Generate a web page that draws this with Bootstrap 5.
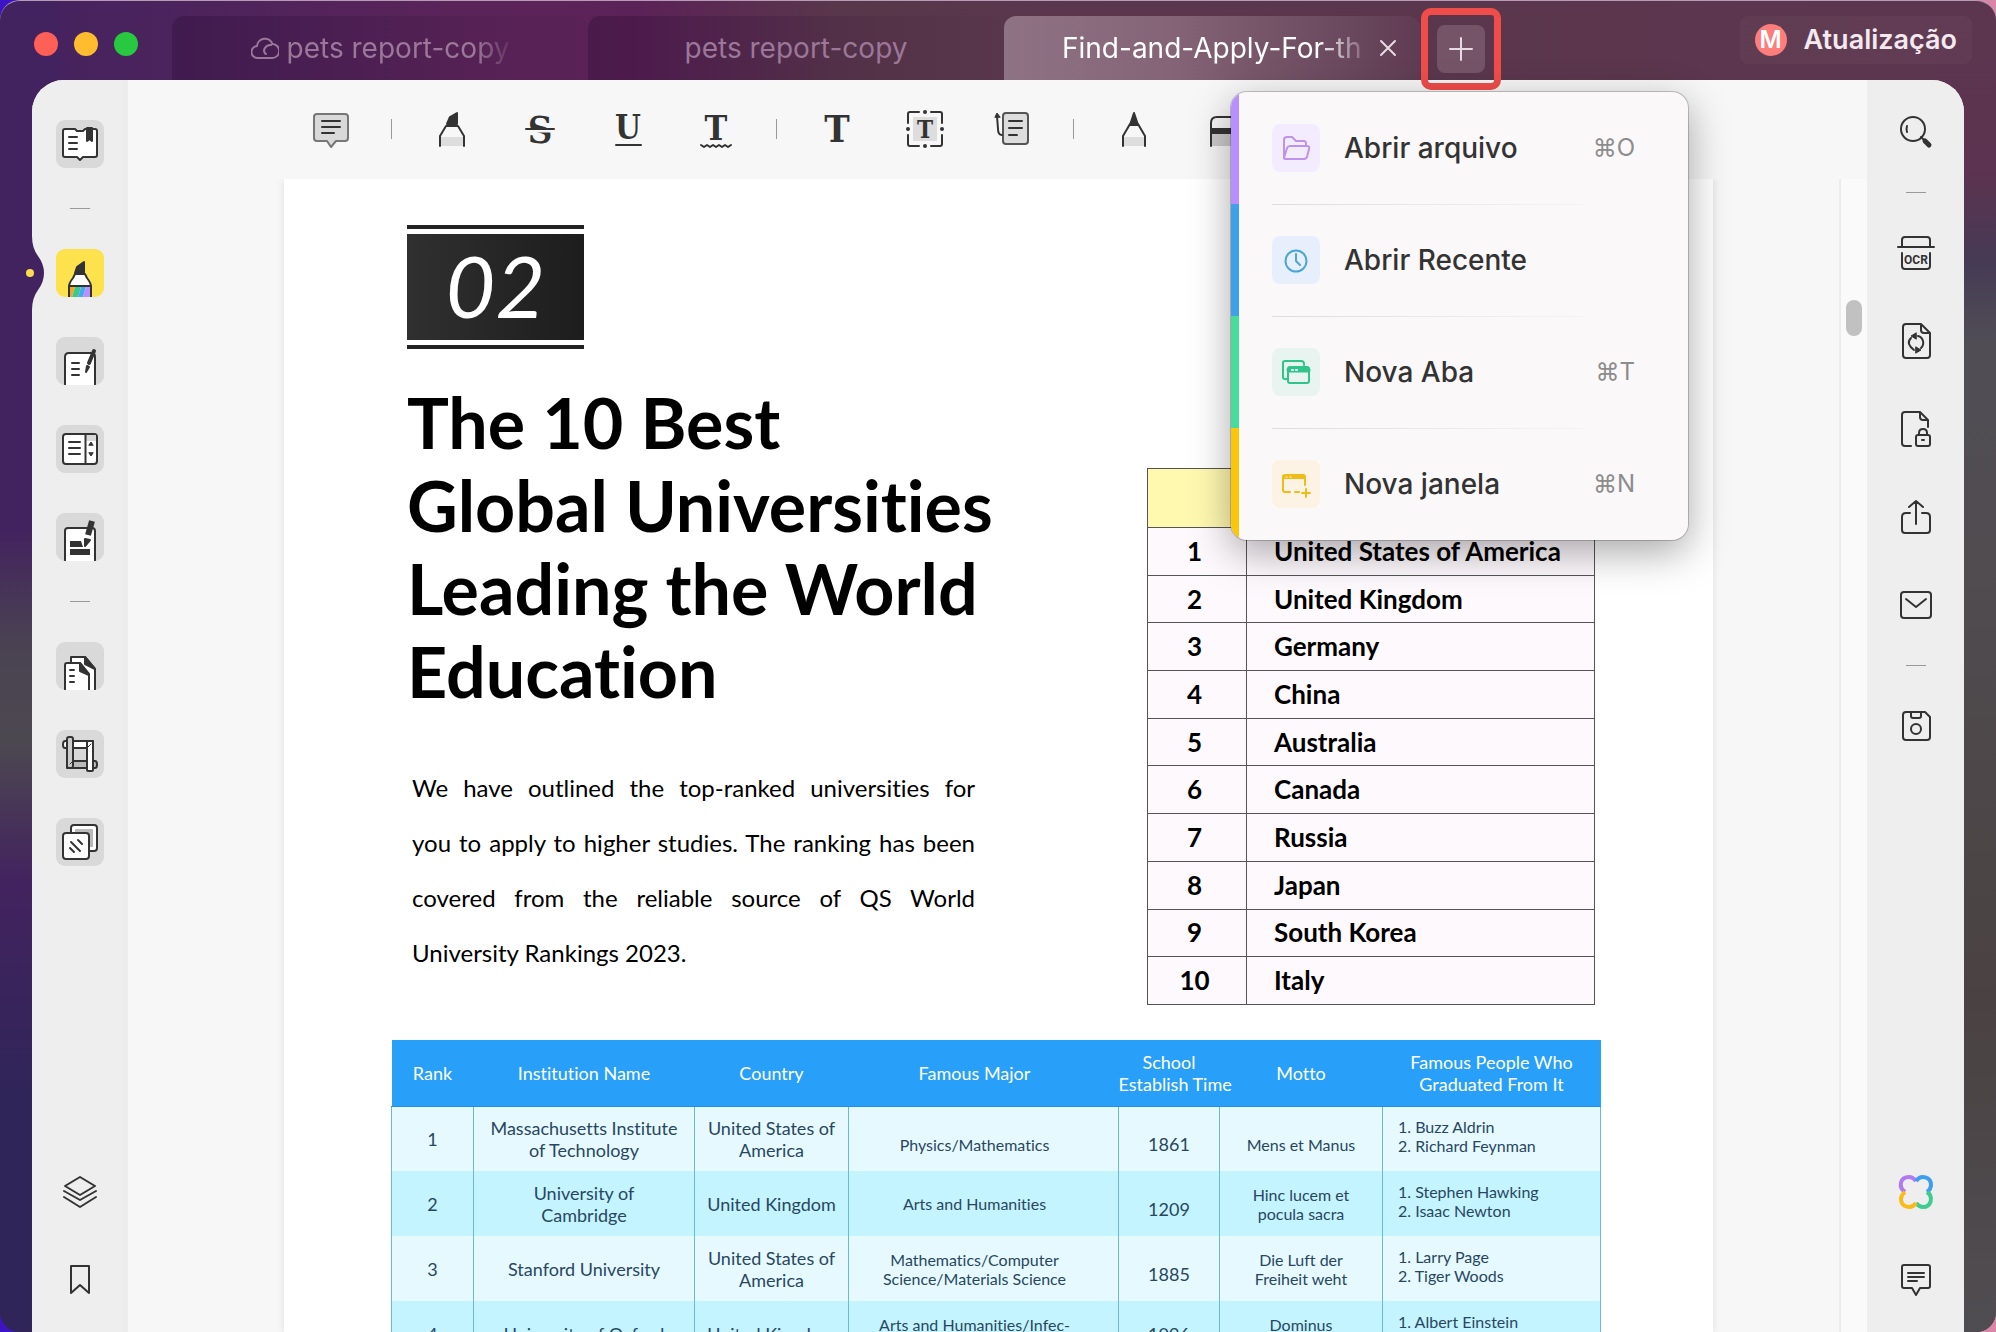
<!DOCTYPE html>
<html lang="pt">
<head>
<meta charset="utf-8">
<meta name="viewport" content="width=device-width, initial-scale=1">
<title>Find-and-Apply-For-the</title>
<link href="https://cdn.jsdelivr.net/npm/bootstrap@5.3.0/dist/css/bootstrap.min.css" rel="stylesheet">
<style>
body{height:100vh;overflow:hidden;font-family:Inter,"Liberation Sans",sans-serif;color:#2b2b2b;background:linear-gradient(90deg,#3d14c4,#8a5a9a 50%,#d887a8)}
button{background:none;border:0;padding:0;color:inherit}
svg{display:block;fill:none;stroke:#333;stroke-width:2;stroke-linejoin:round;stroke-linecap:round}
.app-window{height:100vh;border-radius:20px;border-top:1px solid #b79ab5;overflow:hidden;
 background:
 linear-gradient(180deg,#43235f 0,#43235f 530px,#4a4252 640px,#4c4850 740px,#43235f 880px,#2f2558 1100px,#2f2558 100%) left/60px 100% no-repeat,
 linear-gradient(180deg,#5c364f 0,#5c3350 170px,#463a55 260px,#504d55 340px,#504c50 560px,#4a4242 1000px,#504d52 100%) right/60px 100% no-repeat,
 linear-gradient(90deg,#43235f,#5b2458 24%,#5b2257 32%,#59374b 42%,#5c364f)}
.title-bar{height:79px;z-index:5}
.lights{padding:31px 34px 0;gap:16px}
.lights button{width:24px;height:24px;border-radius:50%}
.doc-tab{width:416px;height:64px;border-radius:12px 12px 0 0;font-size:28px;color:#9b7799}
.doc-tab.idle{background:linear-gradient(90deg,rgba(40,10,50,.32),rgba(40,10,50,.02))}
.doc-tab.current{background:linear-gradient(90deg,#8e7385,#846476 40%,#5f3c53);color:#fff;padding-left:58px}
.tab-label{white-space:nowrap;overflow:hidden}
.faded{-webkit-mask-image:linear-gradient(90deg,#000 85%,rgba(0,0,0,.2));mask-image:linear-gradient(90deg,#000 85%,rgba(0,0,0,.2))}
.doc-tab.current .tab-label{width:300px}
.add-wrap{width:80px;height:82px;border:7px solid #f04d4a;border-radius:10px;margin:7px 0 0 1px}
.add-wrap>button{width:48px;height:48px;border-radius:8px;background:#755468}
.upgrade{height:48px;border-radius:8px;background:rgba(255,255,255,.03);margin:15px 24px 0 0;padding:0 15px;gap:17px;font-size:27px;font-weight:600;color:#f3e9ef}
.avatar-dot{width:32px;height:32px;border-radius:50%;background:#fb7d7c;color:#fff;font-size:24px;line-height:32px}
.new-menu{position:absolute;top:77px;left:-197px;width:457px;border-radius:16px;overflow:hidden;background:#fbf8f9;box-shadow:0 0 0 1px rgba(0,0,0,.2),0 12px 40px rgba(0,0,0,.35)}
.menu-line{height:112px;padding:0 53px 0 33px;border-left:8px solid;position:relative}
.menu-line+.menu-line::before{content:"";position:absolute;left:33px;right:104px;top:0;height:1px;background:linear-gradient(90deg,#ddd,#f6f3f4)}
.tile{width:48px;height:48px;border-radius:8px;margin-right:24px}
.menu-name{font-size:28px;font-weight:500;color:#333}
.keys{font-size:24px;color:#8c8c8c}
.panel{margin:0 32px;border-radius:32px 32px 0 0;background:#f7f7f7;min-height:0}
.rail{background:#eee;gap:40px;flex:none}
.rail-left{width:96px;padding:40px 0 28px 6px;border-right:6px solid #ececec;border-top-left-radius:32px;position:relative}
.rail-right{width:97px;padding:28px 0;border-top-right-radius:32px}
.rail button,.rail svg{flex:none}
.btn-tile{width:48px;height:48px;border-radius:9px;background:#d9d9d9;overflow:hidden}
.rule{width:20px;height:1px;background:#999;flex:none}
.rail-right .rule{margin:-4px 0}
.notch{position:absolute;left:-8px;top:156px}
.tools{height:99px;padding:0 0 2px 183px;gap:40px;background:#f7f7f7}
.tools svg{overflow:visible}
.tool-group{gap:48px}
.vrule{width:1px;height:20px;background:#999}
.canvas-area{padding:0 126px 0 156px;min-height:0;overflow:hidden}
.sheet{background:#fff;height:100%;padding:46px 112px 0 107px;font-family:Lato,"Open Sans",sans-serif;font-variant-ligatures:none;color:#000;box-shadow:0 0 8px rgba(0,0,0,.1);overflow:hidden}
.intro{padding:0 6px 0 16px}
.chapter{width:177px;border:solid #222;border-width:4px 0;padding:5px 0}
.chapter div{height:106px;line-height:102px;font-size:86px;font-style:italic;color:#fff;background:linear-gradient(90deg,#303030,#1d1d1d)}
.sheet h1{font-size:70px;line-height:83px;font-weight:700;margin:32px 0 0;white-space:nowrap}
.sheet p{font-size:24px;line-height:55px;width:563px;margin:47px 0 0 5px}
.full-line{display:block;text-align:justify;text-align-last:justify}
.ranks{width:448px;height:537px;margin-top:243px;border-collapse:collapse;font-size:26px;font-weight:700;line-height:30px}
.ranks td,.ranks th{border:1px solid #555;background:#fef9fd;padding:0 0 1px 27px}
.ranks td:first-child{width:99px;padding:0 5px 1px 0;text-align:center}
.ranks th{height:59px;background:#fff9b0}
.details{width:100%;table-layout:fixed;margin-top:35px;text-align:center;font-size:18px;line-height:22px;color:#28475f}
.details th{height:66px;background:#289ff8;color:#fff;font-weight:400;padding:0;border-bottom:1px solid #1f8fe8;white-space:nowrap}
.details td{height:65px;border-left:1px solid #6cb9d2;padding:0}
.details td:last-child{border-right:1px solid #6cb9d2;text-align:left;padding:0 0 6px 15px}
.details tr:nth-child(odd) td{background:#e6f9ff}
.details tr:nth-child(even) td{background:#c4f4ff}
.details .fine{font-size:16px;line-height:19px}
.details .low{padding-top:11px}
.details th:nth-child(4),.details td:nth-child(4){padding-right:18px}
.track{width:28px;background:#fafafa;border-left:2px solid #ececec;padding:121px 0 0 5px;flex:none}
.thumb{width:16px;height:36px;border-radius:8px;background:#c1c1c1}
.glyph{fill:#333;stroke:none;font-family:"DejaVu Serif Condensed","DejaVu Serif",serif;font-weight:700;text-anchor:middle}
</style>
<script src="https://cdn.jsdelivr.net/npm/bootstrap@5.3.0/dist/js/bootstrap.bundle.min.js"></script>
</head>
<body>
<div class="app-window d-flex flex-column">
 <header class="title-bar d-flex flex-shrink-0 align-items-start position-relative">
  <div class="lights d-flex">
   <button aria-label="Fechar" style="background:#fe5f57"></button><button aria-label="Minimizar" style="background:#febc2e"></button><button aria-label="Maximizar" style="background:#28c840"></button>
  </div>
  <nav class="d-flex align-self-end">
   <button class="doc-tab idle d-flex align-items-center justify-content-center gap-2">
    <svg width="28" height="28" viewBox="0 0 28 28" style="stroke:#9b7799"><path d="M7 24a6 6 0 0 1-1-12 8 8 0 0 1 15.500-2A7 7 0 0 1 21 24zM20 11a6 6 0 0 0-6 3 4 4 0 0 0 1 6"/></svg>
    <span class="tab-label faded">pets report-copy</span></button>
   <button class="doc-tab idle"><span class="tab-label">pets report-copy</span></button>
   <div class="doc-tab current d-flex align-items-center">
    <span class="tab-label faded">Find-and-Apply-For-the</span>
    <button class="ms-3" aria-label="Fechar aba"><svg width="20" height="20" viewBox="0 0 20 20" style="stroke:#e6dbe2"><path d="M3 3l14 14M17 3L3 17"/></svg></button>
   </div>
  </nav>
  <div class="add-wrap position-relative d-flex align-items-center justify-content-center flex-shrink-0">
   <button class="d-flex align-items-center justify-content-center" aria-label="Nova aba"><svg width="24" height="24" viewBox="0 0 24 24" style="stroke:#e6dbe2"><path d="M12 1v22M1 12h22"/></svg></button>
   <div class="new-menu">
    <button class="menu-line d-flex w-100 align-items-center" style="border-color:#b78fff"><span class="tile" style="background:#f3ecfe"><svg width="48" height="48" style="stroke:#bd93ee"><path d="M12 34V16q0-3 3-3h5l4 4h8q2 0 2 3v2M12 34l3-10q1-2 3-2h17q3 0 2 3l-2 8q-1 2-3 2H14q-2 0-2-1z"/></svg></span><span class="menu-name">Abrir arquivo</span><span class="keys ms-auto">⌘O</span></button>
    <button class="menu-line d-flex w-100 align-items-center" style="border-color:#3fa0e8"><span class="tile" style="background:#e8effc"><svg width="48" height="48" style="stroke:#4aa5d9"><circle cx="24" cy="25" r="10.500"/><path d="M24 18v7l4 4"/></svg></span><span class="menu-name">Abrir Recente</span></button>
    <button class="menu-line d-flex w-100 align-items-center" style="border-color:#46dc9b"><span class="tile" style="background:#e8f4f0"><svg width="48" height="48" style="stroke:#2fc48a"><path d="M15 31h-2q-2 0-2-2V15q0-2 2-2h16q3 0 3 3v1"/><rect x="16" y="19" width="21" height="16" rx="2"/><path d="M17 22h19" stroke-width="5"/><path d="M20 22h6" style="stroke:#fff" stroke-dasharray="1 3"/></svg></span><span class="menu-name">Nova Aba</span><span class="keys ms-auto">⌘T</span></button>
    <button class="menu-line d-flex w-100 align-items-center" style="border-color:#fcc70a"><span class="tile" style="background:#fcf3e4"><svg width="48" height="48" style="stroke:#f0bd18"><path d="M18 32h-5q-2 0-2-2V17q0-2 2-2h18q2 0 2 2v8M27 32h-4M34 29v8M30 33h8"/><path d="M12 17h20" style="stroke-width:4"/><path d="M14 17h7" style="stroke:#fff;stroke-width:1" stroke-dasharray="1 3"/></svg></span><span class="menu-name">Nova janela</span><span class="keys ms-auto">⌘N</span></button>
   </div>
  </div>
  <button class="upgrade ms-auto d-flex align-items-center"><span class="avatar-dot">M</span>Atualização</button>
 </header>

 <main class="panel d-flex flex-grow-1">
  <aside class="rail rail-left d-flex flex-column align-items-center">
   <svg class="notch" width="20" height="74" viewBox="0 0 20 74" style="stroke:none"><path d="M0 0h8q0 12 6 20 6 8 6 17t-6 17q-6 8-6 20H0z" fill="#43235f"/><circle cx="6" cy="37" r="4" fill="#fbdc4f"/></svg>
   <button class="btn-tile" aria-label="Leitor"><svg width="48" height="48"><path fill="#fff" d="M9 9h10l2 2h6l2-2h10q2 0 2 2v24q0 2-2 2H27l-3 3-3-3H9q-2 0-2-2V11q0-2 2-2z"/><path d="M31 8h5v13l-2.500-2-2.500 2z" fill="#333"/><path d="M13 17h8M13 23h8M13 29h8"/></svg></button>
   <span class="rule"></span>
   <button class="btn-tile" aria-label="Comentar" style="background:#fde14d"><svg width="48" height="48"><path d="M19 24l2-6 7-5v11z" fill="#333"/><path d="M13 49V38q0-4 4-9l2-4h10l2 4q4 5 4 9v11" fill="#fff"/><g stroke="none"><path fill="#f5a623" d="M14 38h5l-3 10h-2z"/><path fill="#38c98b" d="M19 38h6l-3 10h-6z"/><path fill="#4aa8f0" d="M25 38h5l-3 10h-5z"/><path fill="#b78fff" d="M30 38h4v10h-7z"/></g><path d="M13 37h22"/></svg></button>
   <button class="btn-tile" aria-label="Editar"><svg width="48" height="48"><path fill="#fff" d="M9 50V20q0-4 4-4h23q3 0 3 4v30"/><path d="M16 26h7M16 32h7M16 38h7"/><path d="M38 14l-5 12" style="stroke-width:4"/><path d="M31 29l2 1-3 5z" fill="#333"/></svg></button>
   <button class="btn-tile" aria-label="Formulário"><svg width="48" height="48"><rect x="7" y="9" width="34" height="30" rx="3" fill="#fff"/><path d="M30 10h10v6H30z" fill="#d9d9d9" stroke="none"/><path d="M29.500 9v30M13 17h11M13 23h11M13 29h11"/><path d="M33 20l2-3 2 3zM33 28l2 3 2-3z" fill="#333" style="stroke-width:1"/></svg></button>
   <button class="btn-tile" aria-label="Redigir"><svg width="48" height="48"><path fill="#fff" d="M9 50V18q0-3 3-3h24q3 0 3 3v32"/><path d="M14 28h11l2 6H14zM14 36h20v6H14z" fill="#333" style="stroke:none"/><path d="M36 8l-4 14" style="stroke-width:6;stroke-linecap:butt"/><path d="M29 26l5 1-5 6z" fill="#333"/></svg></button>
   <span class="rule"></span>
   <button class="btn-tile" aria-label="Organizar páginas"><svg width="48" height="48"><path fill="#fff" d="M15 22v-7h14l10 12v23H15z"/><path d="M29 15v7l10 5z" fill="#333"/><path fill="#fff" d="M9 50V23q0-2 2-2h13l9 11v18"/><path d="M24 21v8l9 4zM14 28h4M14 34h4M14 40h4" fill="#333"/></svg></button>
   <button class="btn-tile" aria-label="Recortar"><svg width="48" height="48"><path fill="#fff" d="M9 11h28v7H9q-2 0-2-3.500T9 11z"/><path fill="#bbb" d="M17 31h22q2 0 2 3.500T39 38H11v-7z"/><rect x="11" y="7" width="6" height="31" rx="2" fill="#ccc"/><path d="M17 18h14v13H17z" fill="#d9d9d9"/><rect x="31" y="11" width="6" height="30" rx="1" fill="#fff"/><path d="M32 17l3-3M14 34l3-3" style="stroke-width:1"/></svg></button>
   <button class="btn-tile" aria-label="Marca d'água"><svg width="48" height="48"><rect x="15" y="7" width="26" height="26" rx="3" fill="#fff"/><path d="M19 11h18v18H33V15H19z" fill="#bbb" style="stroke:none"/><rect x="7" y="15" width="26" height="26" rx="3" fill="#fff"/><path d="M15 24l9 9M22 22l4 4M14 30l4 4"/></svg></button>
   <button class="mt-auto" aria-label="Camadas"><svg width="48" height="48"><path d="M24 9l15 9-15 9-15-9zM8 23l16 9 16-9M8 29l16 10 16-10"/></svg></button>
   <button aria-label="Favoritos"><svg width="48" height="48"><path d="M15 10h18v27l-9-8-9 8z"/></svg></button>
  </aside>

  <section class="d-flex flex-column flex-grow-1" style="min-width:0">
   <div class="tools d-flex align-items-center flex-shrink-0">
    <button aria-label="Nota"><svg width="40" height="40"><path fill="#d9d9d9" style="stroke:#777" d="M6 5h28q3 0 3 3v21q0 3-3 3H25l-5 6-4-6H6q-3 0-3-3V8q0-3 3-3z"/><path d="M11 12h18M11 18h18M11 24h12"/></svg></button>
    <span class="vrule"></span>
    <div class="tool-group d-flex">
     <button aria-label="Realçar"><svg width="40" height="40"><path d="M8 28h24v9H8z" fill="#ddd" style="stroke:none"/><path d="M15 15l3-7 7-4v11z" fill="#333"/><path d="M8 37V27l6-10h12l6 10v10"/></svg></button>
     <button aria-label="Tachado"><svg width="40" height="40"><text class="glyph" x="20" y="34" font-size="38">S</text><path d="M4 22h32" style="stroke:#f7f7f7;stroke-width:3"/><path d="M6 20h28"/></svg></button>
     <button aria-label="Sublinhado"><svg width="40" height="40"><text class="glyph" x="20" y="30" font-size="33">U</text><path d="M8 36h25"/></svg></button>
     <button aria-label="Ondulado"><svg width="40" height="40"><text class="glyph" x="20" y="31" font-size="34">T</text><path d="M5 36l3 2 3-2 3 2 3-2 3 2 3-2 3 2 3-2 3 2 3-2"/></svg></button>
    </div>
    <span class="vrule"></span>
    <div class="tool-group d-flex">
     <button aria-label="Texto"><svg width="40" height="40"><text class="glyph" x="20" y="33" font-size="38">T</text></svg></button>
     <button aria-label="Caixa de texto"><svg width="40" height="40"><path d="M8 8h24v24H8z" fill="#ddd" style="stroke:none"/><path d="M3 14V5q0-2 2-2h9M26 3h9q2 0 2 2v9M37 26v9q0 2-2 2h-9M14 37H5q-2 0-2-2v-9"/><g fill="#333" stroke="none"><circle cx="20" cy="3" r="2"/><circle cx="20" cy="37" r="2"/><circle cx="3" cy="20" r="2"/><circle cx="37" cy="20" r="2"/></g><text class="glyph" x="20" y="29" font-size="24">T</text></svg></button>
     <button aria-label="Balão de texto"><svg width="40" height="40"><rect x="10" y="4" width="25" height="31" rx="3" fill="#ddd" style="stroke:#555"/><path d="M16 12h13M16 19h13M16 26h8M9 26q-4 0-4-6L4 7"/><path d="M2 8l2-4 3 4z" fill="#333" style="stroke-width:1"/></svg></button>
    </div>
    <span class="vrule"></span>
    <div class="tool-group d-flex">
     <button aria-label="Lápis"><svg width="40" height="40"><path d="M9 28h22v9H9z" fill="#ddd" style="stroke:none"/><path d="M16 16l4-12 4 12z" fill="#333"/><path d="M9 37V27l7-12h8l7 12v10"/></svg></button>
     <button aria-label="Borracha"><svg width="40" height="40"><path d="M9 25h24v12H9z" fill="#ccc" style="stroke:none"/><path d="M9 37V14q0-6 6-6h16q5 0 5 6v23"/><path d="M9 19h27v6H9z" fill="#333" style="stroke:none"/></svg></button>
    </div>
   </div>
   <div class="d-flex flex-grow-1" style="min-height:0">
    <div class="canvas-area flex-grow-1">
     <article class="sheet">
      <div class="intro d-flex justify-content-between align-items-start">
       <div>
        <div class="chapter text-center"><div>02</div></div>
        <h1>The 10 Best<br>Global Universities<br>Leading the World<br>Education</h1>
        <p><span class="full-line">We have outlined the top-ranked universities for</span> <span class="full-line">you to apply to higher studies. The ranking has been</span> <span class="full-line">covered from the reliable source of QS World</span> University Rankings 2023.</p>
       </div>
       <table class="ranks">
        <thead><tr><th colspan="2"></th></tr></thead>
        <tbody>
        <tr><td>1</td><td>United States of America</td></tr>
        <tr><td>2</td><td>United Kingdom</td></tr>
        <tr><td>3</td><td>Germany</td></tr>
        <tr><td>4</td><td>China</td></tr>
        <tr><td>5</td><td>Australia</td></tr>
        <tr><td>6</td><td>Canada</td></tr>
        <tr><td>7</td><td>Russia</td></tr>
        <tr><td>8</td><td>Japan</td></tr>
        <tr><td>9</td><td>South Korea</td></tr>
        <tr><td>10</td><td>Italy</td></tr>
        </tbody>
       </table>
      </div>
      <table class="details">
       <colgroup><col style="width:82px"><col style="width:221px"><col style="width:154px"><col style="width:270px"><col style="width:101px"><col style="width:163px"><col style="width:218px"></colgroup>
       <thead><tr><th>Rank</th><th>Institution Name</th><th>Country</th><th>Famous Major</th><th>School<br>Establish Time</th><th>Motto</th><th>Famous People Who<br>Graduated From It</th></tr></thead>
       <tbody>
       <tr><td>1</td><td>Massachusetts Institute<br>of Technology</td><td>United States of<br>America</td><td class="fine low">Physics/Mathematics</td><td class="low">1861</td><td class="fine low">Mens et Manus</td><td class="fine">1. Buzz Aldrin<br>2. Richard Feynman</td></tr>
       <tr><td>2</td><td>University of<br>Cambridge</td><td>United Kingdom</td><td class="fine">Arts and Humanities</td><td class="low">1209</td><td class="fine">Hinc lucem et<br>pocula sacra</td><td class="fine">1. Stephen Hawking<br>2. Isaac Newton</td></tr>
       <tr><td>3</td><td>Stanford University</td><td>United States of<br>America</td><td class="fine">Mathematics/Computer<br>Science/Materials Science</td><td class="low">1885</td><td class="fine">Die Luft der<br>Freiheit weht</td><td class="fine">1. Larry Page<br>2. Tiger Woods</td></tr>
       <tr><td>4</td><td>University of Oxford</td><td>United Kingdom</td><td class="fine">Arts and Humanities/Infec-<br>&nbsp;</td><td>1096</td><td class="fine">Dominus<br>&nbsp;</td><td class="fine">1. Albert Einstein<br>&nbsp;</td></tr>
       </tbody>
      </table>
     </article>
    </div>
    <div class="track"><div class="thumb"></div></div>
   </div>
  </section>

  <aside class="rail rail-right d-flex flex-column align-items-center">
   <button aria-label="Pesquisar"><svg width="48" height="48"><circle cx="21" cy="21" r="12"/><path d="M15 18q-1 3 0 6M29 29l3 3"/><path d="M33 33l4 4" style="stroke-width:5"/></svg></button>
   <span class="rule"></span>
   <button aria-label="OCR"><svg width="48" height="48"><path d="M10 18v-7q0-3 3-3h22q3 0 3 3v7M6 18h36M10 24v13q0 3 3 3h22q3 0 3-3V24"/><text x="24" y="35" font-size="12" font-weight="700" font-family="Roboto,sans-serif" text-anchor="middle" fill="#333" stroke="none">OCR</text></svg></button>
   <button aria-label="Converter"><svg width="48" height="48"><path d="M14 7h15l9 9v22q0 3-3 3H14q-3 0-3-3V10q0-3 3-3zM29 7v6q0 3 3 3h6"/><path d="M19 21q-3 3-2 6t5 6M29 31q3-3 2-7t-5-5"/><path d="M24 16l-5 3 5 3zM24 30l5 3-5 3z" fill="#333" style="stroke-width:1"/></svg></button>
   <button aria-label="Proteger"><svg width="48" height="48"><path d="M19 41h-6q-3 0-3-3V10q0-3 3-3h15l8 8v7M28 7v5q0 3 3 3h5"/><rect x="24" y="30" width="14" height="11" rx="2"/><path d="M27 30v-2q0-4 4-4t4 4v2M30 35h2"/></svg></button>
   <button aria-label="Compartilhar"><svg width="48" height="48"><path d="M18 20h-4q-4 0-4 4v13q0 3 3 3h22q3 0 3-3V24q0-4-4-4h-4M24 31V8M17 14l7-6 7 6"/></svg></button>
   <button aria-label="E-mail"><svg width="48" height="48"><rect x="9" y="11" width="30" height="26" rx="3"/><path d="M14 18l10 8 10-8"/></svg></button>
   <span class="rule"></span>
   <button aria-label="Salvar"><svg width="48" height="48"><path d="M14 10h19l5 5v20q0 3-3 3H14q-3 0-3-3V13q0-3 3-3zM19 10v4q0 2 2 2h6q2 0 2-2v-4"/><circle cx="24" cy="27" r="5"/></svg></button>
   <button class="mt-auto" aria-label="Assistente de IA"><svg width="48" height="48" style="stroke-width:4;stroke-linecap:butt"><path style="stroke:#b07af0" d="M13 24c-7-5-5-15 4-15q4 0 7 4"/><path style="stroke:#3d9df0" d="M24 13c5-7 15-4 15 4q0 4-4 7"/><path style="stroke:#3fcb90" d="M35 24c7 5 4 15-4 15q-4 0-7-4"/><path style="stroke:#fabb18" d="M24 35c-5 7-15 4-15-4q0-4 4-7"/></svg></button>
   <button aria-label="Comentários"><svg width="48" height="48"><path d="M12 9h24q2 0 2 2v19q0 2-2 2h-8l-4 7-4-7h-8q-2 0-2-2V11q0-2 2-2zM16 17h16M16 21h16M16 25h9"/></svg></button>
  </aside>
 </main>
</div>
</body>
</html>
